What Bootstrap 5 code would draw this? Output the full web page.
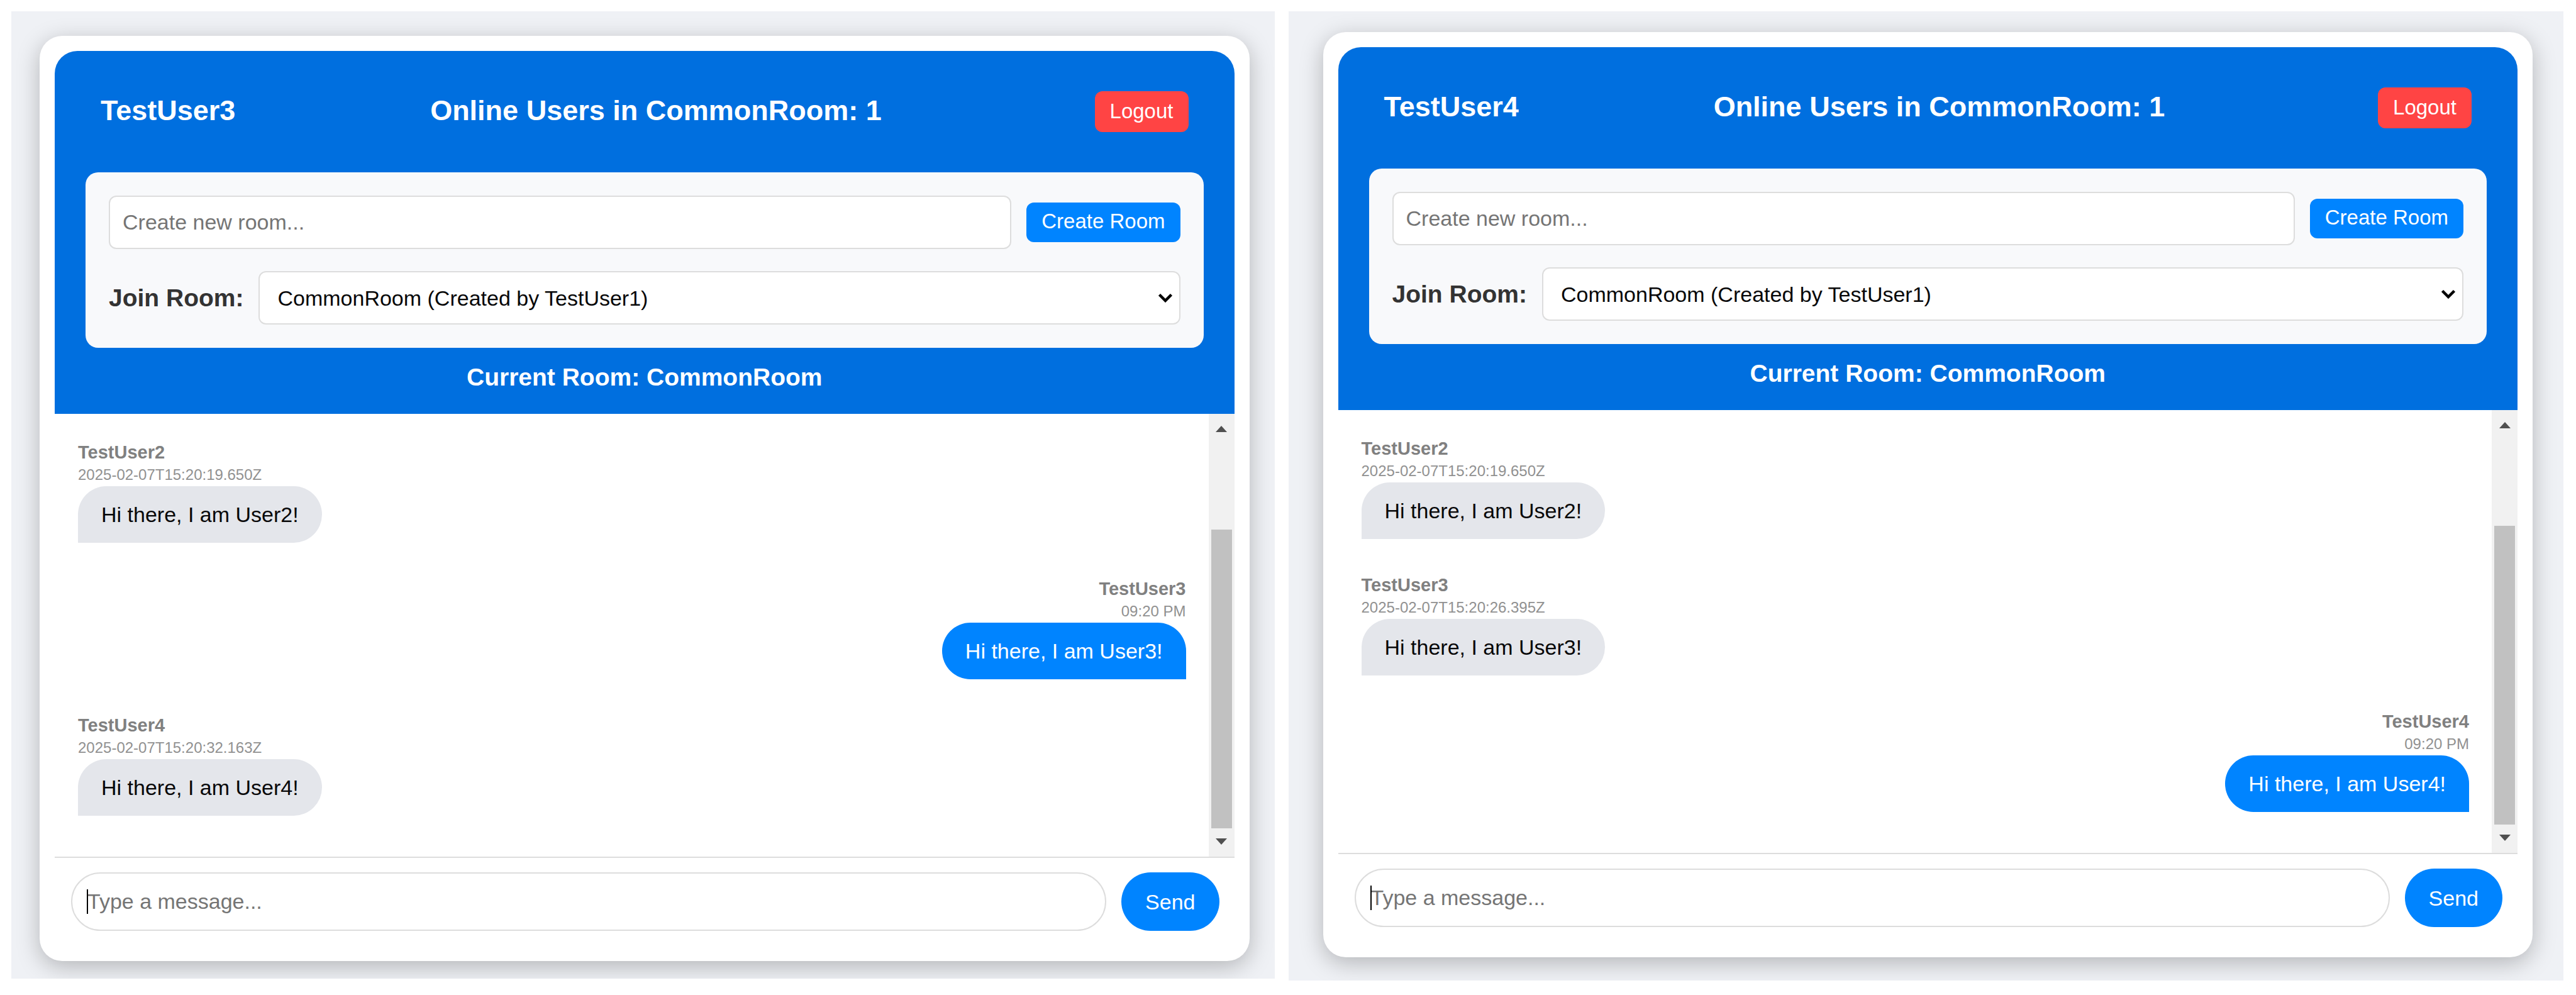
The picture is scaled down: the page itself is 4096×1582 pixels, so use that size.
<!DOCTYPE html>
<html lang="en">
<head>
<meta charset="utf-8">
<meta name="viewport" content="width=device-width, initial-scale=1">
<title>Chat rooms</title>
<link href="https://cdn.jsdelivr.net/npm/bootstrap@5.3.0/dist/css/bootstrap.min.css" rel="stylesheet">
<style>
  body { background: #fff; color: #080809; font-family: "Liberation Sans", Arial, sans-serif; font-size: 34px; line-height: 40px; }
  .windows { padding: 18px 20px 22px 18px; gap: 22px; }
  .pane { background: #eff1f5; overflow: hidden; flex: 1 1 0; }
  .pane-a { padding: 39px 40px 28px 45px; }
  .pane-b { padding: 33px 49px 37px 55px; }
  .chat { background: #fff; border-radius: 36px; padding: 24px; box-shadow: 0 9px 36px rgba(0,0,0,.25); }
  .chat-head { background: #006fdf; color: #fff; border-radius: 36px 36px 0 0; padding: 0 49px 36px; }
  .head-row { padding: 0 24px; height: 193px; }
  .head-title { font-size: 45px; line-height: 52px; font-weight: 700; margin: 0; padding-bottom: 3px; }
  .online-title { margin-right: 29px; }
  .btn-logout, .btn-create { font-size: 33px; line-height: 38px; color: #fff; border: 0; border-radius: 12px; }
  .btn-logout { background: #ff4444; padding: 13px 24px 14px; }
  .btn-create { background: #0084ff; padding: 11px 24px 14px; }
  .btn-send { background: #0084ff; color: #fff; border: 0; border-radius: 47px; font-size: 34px; line-height: 40px; padding: 0 38px; }
  .btn-logout:hover, .btn-create:hover, .btn-send:hover { background: #0070e0; color: #fff; }
  .room-box { background: #f8f9fb; border-radius: 20px; padding: 37px; gap: 35px; }
  .room-line, .compose { gap: 24px; }
  .room-line .form-control, .room-line .form-select { height: 85px; border: 2px solid #dddddd; border-radius: 12px; font-size: 34px; line-height: 40px; color: #080809; }
  .room-line .form-control { padding: 0 20px; }
  .room-line .form-select { padding: 0 60px 0 28px; background: #fff url("data:image/svg+xml,%3Csvg xmlns='http://www.w3.org/2000/svg' viewBox='0 0 24 15'%3E%3Cpath d='M2.5 2.5 12 12 21.500 2.500' fill='none' stroke='%23000' stroke-width='4.500'/%3E%3C/svg%3E") no-repeat right 10px center / 24px 15px; }
  .form-control::placeholder { color: #757575; opacity: 1; }
  .join-label { color: #333; font-size: 39px; line-height: 45px; font-weight: 700; white-space: nowrap; }
  .current-room { font-size: 39px; line-height: 45px; font-weight: 700; margin: 24px 0 0; }
  .log { padding: 43px 36px 65px 37px; gap: 55px; }
  .who { color: #808080; font-size: 29px; line-height: 36px; font-weight: 700; }
  .stamp { color: #919191; font-size: 24px; line-height: 36px; }
  .bubble { background: #e4e6eb; padding: 25px 37px; border-radius: 45px 45px 45px 0; }
  .mine .bubble { background: #0084ff; color: #fff; border-radius: 45px 45px 0 45px; }
  .scroller { width: 41px; background: #f1f1f1; padding: 19px 4px; }
  .scroller svg { width: 18px; height: 10px; fill: #505050; }
  .thumb { background: #c1c1c1; margin: 155px 0 16px; }
  .compose { border-top: 2px solid #dddddd; padding: 23px 24px 24px 26px; }
  .compose .form-control { height: 93px; border: 2px solid #dddddd; border-radius: 47px; padding: 0 24px; font-size: 34px; line-height: 40px; }
  .caret { top: 27px; left: 25px; width: 2px; height: 39px; background: #000; }
</style>
</head>
<body>
<main class="windows d-flex align-items-start">

  <section class="pane pane-a">
    <div class="chat">
      <header class="chat-head">
        <div class="head-row d-flex justify-content-between align-items-center">
          <h2 class="head-title">TestUser3</h2>
          <h2 class="head-title online-title">Online Users in CommonRoom: 1</h2>
          <button type="button" class="btn btn-logout">Logout</button>
        </div>
        <div class="room-box d-flex flex-column">
          <div class="room-line d-flex align-items-center">
            <input type="text" class="form-control flex-fill" placeholder="Create new room..." aria-label="Create new room">
            <button type="button" class="btn btn-create flex-shrink-0">Create Room</button>
          </div>
          <div class="room-line d-flex align-items-center">
            <label class="join-label" for="room-a">Join Room:</label>
            <select class="form-select" id="room-a"><option>CommonRoom (Created by TestUser1)</option></select>
          </div>
        </div>
        <p class="current-room text-center">Current Room: CommonRoom</p>
      </header>
      <div class="d-flex">
        <div class="log d-flex flex-column flex-fill">
          <article class="d-flex flex-column align-items-start">
            <div class="who">TestUser2</div>
            <div class="stamp">2025-02-07T15:20:19.650Z</div>
            <div class="bubble">Hi there, I am User2!</div>
          </article>
          <article class="mine d-flex flex-column align-items-end">
            <div class="who">TestUser3</div>
            <div class="stamp">09:20 PM</div>
            <div class="bubble">Hi there, I am User3!</div>
          </article>
          <article class="d-flex flex-column align-items-start">
            <div class="who">TestUser4</div>
            <div class="stamp">2025-02-07T15:20:32.163Z</div>
            <div class="bubble">Hi there, I am User4!</div>
          </article>
        </div>
        <div class="scroller d-flex flex-column" aria-hidden="true">
          <svg class="align-self-center" viewBox="0 0 18 10"><path d="M0 10 9 0l9 10z"/></svg>
          <div class="thumb flex-fill"></div>
          <svg class="align-self-center" viewBox="0 0 18 10"><path d="M0 0 9 10l9-10z"/></svg>
        </div>
      </div>
      <div class="compose d-flex">
        <div class="position-relative flex-fill">
          <input type="text" class="form-control" placeholder="Type a message..." aria-label="Type a message">
          <span class="caret position-absolute"></span>
        </div>
        <button type="button" class="btn btn-send">Send</button>
      </div>
    </div>
  </section>

  <section class="pane pane-b">
    <div class="chat">
      <header class="chat-head">
        <div class="head-row d-flex justify-content-between align-items-center">
          <h2 class="head-title">TestUser4</h2>
          <h2 class="head-title online-title">Online Users in CommonRoom: 1</h2>
          <button type="button" class="btn btn-logout">Logout</button>
        </div>
        <div class="room-box d-flex flex-column">
          <div class="room-line d-flex align-items-center">
            <input type="text" class="form-control flex-fill" placeholder="Create new room..." aria-label="Create new room">
            <button type="button" class="btn btn-create flex-shrink-0">Create Room</button>
          </div>
          <div class="room-line d-flex align-items-center">
            <label class="join-label" for="room-b">Join Room:</label>
            <select class="form-select" id="room-b"><option>CommonRoom (Created by TestUser1)</option></select>
          </div>
        </div>
        <p class="current-room text-center">Current Room: CommonRoom</p>
      </header>
      <div class="d-flex">
        <div class="log d-flex flex-column flex-fill">
          <article class="d-flex flex-column align-items-start">
            <div class="who">TestUser2</div>
            <div class="stamp">2025-02-07T15:20:19.650Z</div>
            <div class="bubble">Hi there, I am User2!</div>
          </article>
          <article class="d-flex flex-column align-items-start">
            <div class="who">TestUser3</div>
            <div class="stamp">2025-02-07T15:20:26.395Z</div>
            <div class="bubble">Hi there, I am User3!</div>
          </article>
          <article class="mine d-flex flex-column align-items-end">
            <div class="who">TestUser4</div>
            <div class="stamp">09:20 PM</div>
            <div class="bubble">Hi there, I am User4!</div>
          </article>
        </div>
        <div class="scroller d-flex flex-column" aria-hidden="true">
          <svg class="align-self-center" viewBox="0 0 18 10"><path d="M0 10 9 0l9 10z"/></svg>
          <div class="thumb flex-fill"></div>
          <svg class="align-self-center" viewBox="0 0 18 10"><path d="M0 0 9 10l9-10z"/></svg>
        </div>
      </div>
      <div class="compose d-flex">
        <div class="position-relative flex-fill">
          <input type="text" class="form-control" placeholder="Type a message..." aria-label="Type a message">
          <span class="caret position-absolute"></span>
        </div>
        <button type="button" class="btn btn-send">Send</button>
      </div>
    </div>
  </section>

</main>
<script src="https://cdn.jsdelivr.net/npm/bootstrap@5.3.0/dist/js/bootstrap.bundle.min.js"></script>
</body>
</html>
